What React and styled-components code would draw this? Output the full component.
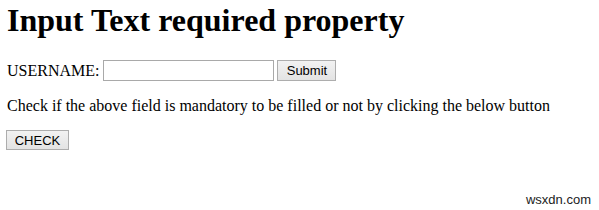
import React from "react";
import styled, { createGlobalStyle } from "styled-components";

const Global = createGlobalStyle`
  html, body { background: #fff; }
  body {
    margin: 0;
    padding: 2px 8px 8px 7px;
    font-family: "Liberation Serif", "Times New Roman", serif;
    font-size: 16px;
    color: #000;
  }
`;

const Page = styled.div`
  position: relative;
  min-height: 200px;
`;

const Title = styled.h1`
  font-size: 32px;
  font-weight: bold;
  margin: 0 0 21px;
  line-height: 37px;
`;

const Row = styled.p`
  margin: 0 0 15px;
  display: flex;
  align-items: center;
  line-height: 21px;
`;

const Text = styled.p`
  margin: 0 0 15px;
  line-height: 19px;
`;

const Field = styled.input`
  box-sizing: border-box;
  width: 171px;
  height: 21px;
  margin: 0 3px 0 4px;
  padding: 1px 2px;
  border: 1px solid #a9a9a9;
  background: #fff;
  font-family: "Liberation Sans", Arial, sans-serif;
  font-size: 13px;
  outline: none;
`;

const Button = styled.button`
  box-sizing: border-box;
  width: ${(p) => p.$w}px;
  height: ${(p) => p.$h || 21}px;
  padding: 0;
  margin: 0;
  border: 1px solid #adadad;
  border-radius: 0;
  background: linear-gradient(#f2f2f2, #e3e3e3);
  font-family: "Liberation Sans", Arial, sans-serif;
  font-size: 13px;
  color: #000;
  cursor: default;
`;

const Block = styled.div`
  margin-left: -1px;
  line-height: 0;
`;

const Watermark = styled.span`
  position: absolute;
  right: 0;
  top: 190px;
  font-family: "Liberation Sans", Arial, sans-serif;
  font-size: 13px;
  color: #222;
`;

export default function App() {
  return (
    <Page>
      <Global />
      <Title>Input Text required property</Title>
      <Row>
        USERNAME:<Field type="text" />
        <Button $w={59}>Submit</Button>
      </Row>
      <Text>
        Check if the above field is mandatory to be filled or not by clicking the below button
      </Text>
      <Block>
        <Button $w={63} $h={20}>CHECK</Button>
      </Block>
      <Watermark>wsxdn.com</Watermark>
    </Page>
  );
}
